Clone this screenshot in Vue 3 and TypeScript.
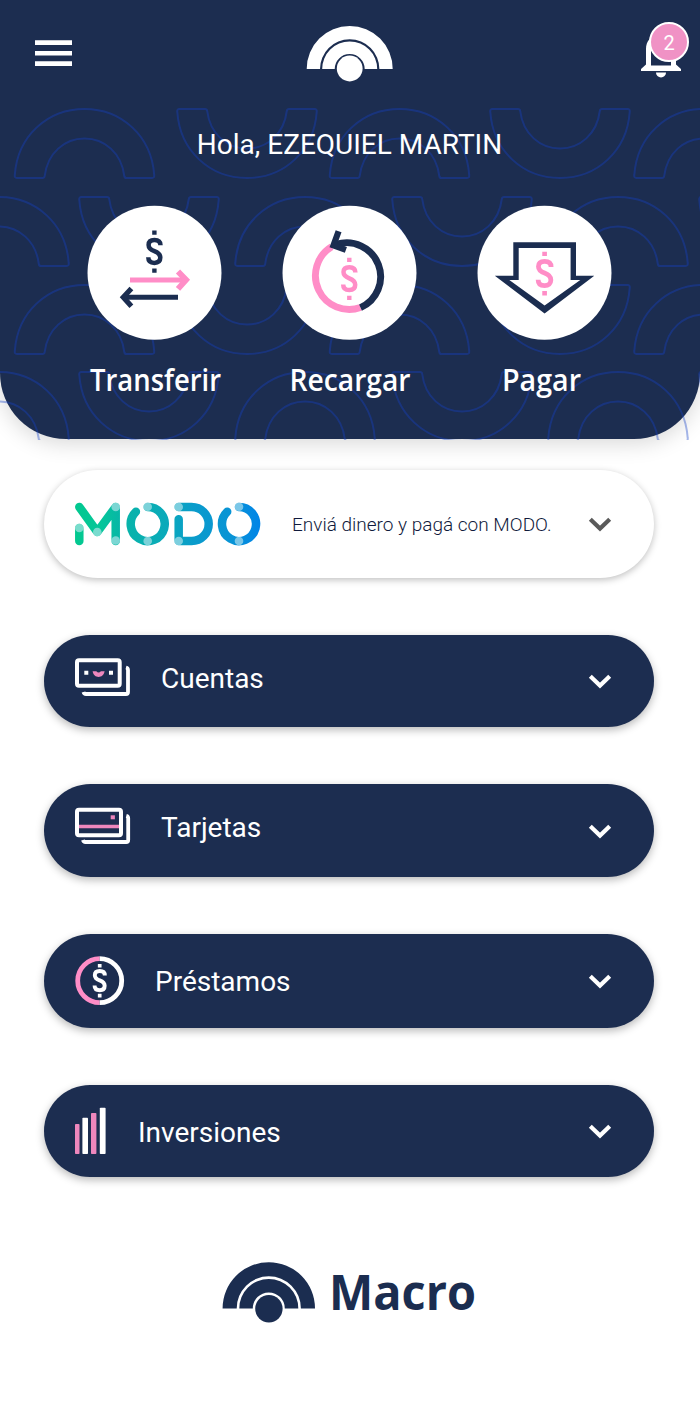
<script setup lang="ts">
interface Arch { x: number; y: number; flip: boolean }
interface Product { id: string; label: string; top: number; height: number; iconWidth: number }

const evenRow = [
  { x: 84.5, flip: false }, { x: 247, flip: true }, { x: 399.5, flip: false },
  { x: 560, flip: true }, { x: 704, flip: false },
]
const oddRow = [
  { x: -1, flip: false }, { x: 149, flip: true }, { x: 305, flip: false },
  { x: 462, flip: true }, { x: 618, flip: false }, { x: 769, flip: true },
]
const arches: Arch[] = [109, 197, 285, 372].flatMap((y, i) =>
  (i % 2 ? oddRow : evenRow).map((a) => ({ ...a, y })),
)
const archPath =
  'M-67.5 69 C-69.3 69 -70 68 -69.7 66 C-67 27 -37 0 0 0 C37 0 67 27 69.7 66 C70 68 69.3 69 67.5 69 H42 C40.6 69 40 68.400 39.800 67 C37 44 20 29.500 0 29.500 C-20 29.500 -37 44 -39.800 67 C-40 68.400 -40.600 69 -42 69 Z'
const dollarPath =
  'M6.100 -6.200 C6.100 -9.900 3.700 -11.500 0 -11.500 C-3.700 -11.500 -5.800 -9.700 -5.800 -6.600 C-5.800 -2.900 -3.200 -1.600 0 -.4 C3.500 .9 5.900 2.500 5.900 6.100 C5.900 9.500 3.700 11.400 0 11.400 C-3.800 11.400 -6.100 9.500 -6.100 5.800'

const products: Product[] = [
  { id: 'cuentas', label: 'Cuentas', top: 635, height: 92, iconWidth: 56 },
  { id: 'tarjetas', label: 'Tarjetas', top: 784, height: 93, iconWidth: 56 },
  { id: 'prestamos', label: 'Préstamos', top: 934, height: 94, iconWidth: 50 },
  { id: 'inversiones', label: 'Inversiones', top: 1085, height: 92, iconWidth: 32 },
]
const modoDots = [
  [79.3, 528], [97.3, 532], [115.7, 507], [115.7, 540.5], [147.7, 506.7],
  [147.7, 541], [178.7, 507], [178.7, 541], [239, 506.7], [239, 541],
]
</script>

<template>
  <main class="screen">
    <header class="hero">
      <svg class="pattern" viewBox="0 0 700 440" width="700" height="440">
        <g fill="none" stroke="#1443c8" stroke-opacity=".38" stroke-width="2">
          <path
            v-for="(a, i) in arches"
            :key="i"
            :d="archPath"
            :transform="a.flip ? `translate(${a.x} ${a.y + 69}) scale(1 -1)` : `translate(${a.x} ${a.y})`"
          />
        </g>
      </svg>
      <nav class="topbar">
        <svg class="menu" viewBox="35 40 37 27" width="37" height="27" fill="#fff">
          <path d="M35 40.300h37v4.700H35zM35 51h37v4.600H35zM35 61.300h37v4.600H35z" />
        </svg>
        <svg class="brand" viewBox="306 25 88 58" width="88" height="58" fill="#fff">
          <path d="M306.700 69a43 43 0 0 1 86 0H379.400a29.700 29.700 0 0 0 -59.400 0Z" />
          <path d="M322.200 69a27.500 27.500 0 0 1 55 0H364.700a15 15 0 0 0 -30 0Z" />
          <circle cx="349.700" cy="68.500" r="12.900" />
        </svg>
        <div class="alerts">
          <svg viewBox="640 30 42 49" width="42" height="49" fill="#fff">
            <path fill-rule="evenodd" d="M646 64.500V49c0-8 5-13 12-14.500V33h6v1.500c8 2 12 7 12 14.500v15.500l5 4.500v2h-40v-2ZM651 65.500h20V49c0-6-4-10-10-10s-10 4-10 10Z" />
            <path d="M656 72.500h10a5 5 0 0 1 -10 0Z" />
          </svg>
          <span class="badge">2</span>
        </div>
      </nav>
      <h1 class="greeting">Hola, EZEQUIEL MARTIN</h1>
      <div class="actions">
        <div class="action">
          <svg class="disc" viewBox="87 205 135 135" width="135" height="135">
            <circle cx="154.500" cy="272.700" r="67" fill="#fff" />
            <g transform="translate(154.400 251.500)">
              <path :d="dollarPath" fill="none" stroke="#1b2d50" stroke-width="4.500" />
              <path d="M-2.200-21h4.400v4.200h-4.400zM-2.200 17h4.400v4.200h-4.400z" fill="#1b2d50" />
            </g>
            <g fill="none" stroke-width="5">
              <path d="M130 279.900H185" stroke="#ff8dc7" />
              <path d="M178 271.500l8.100 8.400-8.100 9" stroke="#ff8dc7" stroke-width="5.800" />
              <path d="M178 297.200H124" stroke="#1b2d50" />
              <path d="M131.400 288.500l-8.100 8.700 8.100 9" stroke="#1b2d50" stroke-width="5.200" />
            </g>
          </svg>
          <svg class="caption" viewBox="79 345 150 61" width="150" height="61">
            <text x="90" y="391" textLength="131" lengthAdjust="spacingAndGlyphs">Transferir</text>
          </svg>
        </div>
        <div class="action">
          <svg class="disc" viewBox="281.700 205 135 135" width="135" height="135">
            <circle cx="349.200" cy="272.700" r="67" fill="#fff" />
            <g fill="none" stroke-width="6.900">
              <path d="M331.300 246.700A33.900 33.900 0 0 0 360.200 307.600" stroke="#ff8dc7" />
              <path d="M335.900 244.400A33.900 33.900 0 0 1 360.200 307.600" stroke="#1b2d50" />
            </g>
            <path d="M338.300 231.300L333.200 245.300 345.600 249.800" fill="none" stroke="#1b2d50" stroke-width="6.200" />
            <g transform="translate(349 278.700)">
              <path :d="dollarPath" fill="none" stroke="#ff8dc7" stroke-width="4.500" />
              <path d="M-2.200-21h4.400v4.200h-4.400zM-2.200 17h4.400v4.200h-4.400z" fill="#ff8dc7" />
            </g>
          </svg>
          <svg class="caption" viewBox="274 345 150 61" width="150" height="61">
            <text x="289.500" y="391" textLength="121" lengthAdjust="spacingAndGlyphs">Recargar</text>
          </svg>
        </div>
        <div class="action">
          <svg class="disc" viewBox="476.700 205 135 135" width="135" height="135">
            <circle cx="544.200" cy="272.700" r="67" fill="#fff" />
            <path fill-rule="evenodd" fill="#1b2d50" d="M513 242.300H575.700V275.700H594L544.300 313.500 494.500 275.700H513ZM518.400 248V280H509L544.300 305.500 580 280H570.300V248Z" />
            <g transform="translate(544.300 273.500) scale(1.060)">
              <path :d="dollarPath" fill="none" stroke="#ff8dc7" stroke-width="4.500" />
              <path d="M-2.200-20.600h4.400v4.200h-4.400zM-2.200 16.600h4.400v4.200h-4.400z" fill="#ff8dc7" />
            </g>
          </svg>
          <svg class="caption" viewBox="469 345 150 61" width="150" height="61">
            <text x="502" y="391" textLength="79" lengthAdjust="spacingAndGlyphs">Pagar</text>
          </svg>
        </div>
      </div>
    </header>

    <section class="card modo">
      <svg viewBox="74 501 188 46" width="188" height="46">
        <defs>
          <linearGradient id="modo-tone" gradientUnits="userSpaceOnUse" x1="75" y1="524" x2="261" y2="524">
            <stop offset="0" stop-color="#02c88f" />
            <stop offset=".14" stop-color="#05c69a" />
            <stop offset=".25" stop-color="#08b5a8" />
            <stop offset=".5" stop-color="#0aa9bb" />
            <stop offset=".65" stop-color="#0a9bcc" />
            <stop offset=".85" stop-color="#0893d6" />
            <stop offset="1" stop-color="#0084e8" />
          </linearGradient>
        </defs>
        <g fill="none" stroke="url(#modo-tone)" stroke-width="8.500" stroke-linecap="round" stroke-linejoin="round">
          <path d="M79.300 528l.01 12.900M79.300 506.900L97.300 532 115.700 506.900V540.900" />
          <path d="M135.900 511.700A17 17.100 0 1 0 147.700 506.900" />
          <path d="M178.700 506.900H191.600A17.100 17.100 0 0 1 191.600 541.100H178.700L178.690 519.300" />
          <path d="M227.200 511.700A17 17.100 0 1 0 239 506.900" />
        </g>
        <circle v-for="([x, y], i) in modoDots" :key="i" :cx="x" :cy="y" r="4.300" fill="#c4e9f0" fill-opacity=".62" />
      </svg>
      <span class="pitch">Enviá dinero y pagá con MODO.</span>
      <svg class="chevron" viewBox="0 0 24 16" width="24" height="16">
        <path d="M2.300 3.300L12 12.500 21.700 3.300" />
      </svg>
    </section>

    <section v-for="p in products" :key="p.id" class="card product" :class="p.id">
      <svg :viewBox="`75 ${p.top} ${p.iconWidth} ${p.height}`" :width="p.iconWidth" :height="p.height">
        <template v-if="p.id === 'cuentas'">
          <g fill="none" stroke="#fff" stroke-width="4">
            <rect x="77" y="660.200" width="42.700" height="25.600" rx="2" />
            <path d="M126 667.500q2 .5 2 2.500V692q0 2-2 2H86q-2 0-2.500-2" stroke-width="3.800" />
          </g>
          <path d="M92.600 671.200h3.700q2.300 2.600 4.600 0h3.700c-1.200 7.600-10.800 7.600-12 0Z" fill="#ee87bd" />
          <path d="M84.300 670.700h4v4h-4zM109 670.700h4v4h-4z" fill="#fff" />
        </template>
        <template v-else-if="p.id === 'tarjetas'">
          <path d="M78 826.500h43" stroke="#ee87bd" stroke-width="3.600" />
          <g fill="none" stroke="#fff" stroke-width="4">
            <rect x="77" y="809.700" width="44" height="25.600" rx="2" />
            <path d="M126.300 815.800q1.900.5 1.900 2.500V840q0 2-2 2H85.500q-2 0-2.500-2" stroke-width="3.800" />
          </g>
          <rect x="110.700" y="815.300" width="4.200" height="4" fill="#ee87bd" />
        </template>
        <template v-else-if="p.id === 'prestamos'">
          <g fill="none" stroke-width="4.800">
            <path d="M99.700 958.700a22 22 0 0 0 0 44" stroke="#ff8dc7" />
            <path d="M99.700 958.700a22 22 0 0 1 0 44" stroke="#fff" />
          </g>
          <g transform="translate(99.700 980.700) scale(.84)">
            <path :d="dollarPath" fill="none" stroke="#fff" stroke-width="4.700" />
            <path d="M-2.200-20h4.400v4.400h-4.400zM-2.200 15.600h4.400v4.400h-4.400z" fill="#fff" />
          </g>
        </template>
        <template v-else>
          <g fill="#ee87bd">
            <rect x="75" y="1124" width="4.500" height="30" rx=".8" />
            <rect x="91" y="1113" width="5.400" height="41" rx=".8" />
          </g>
          <g fill="#fff">
            <rect x="82.400" y="1117.700" width="5.600" height="36.300" rx=".8" />
            <rect x="99.800" y="1107.800" width="5.800" height="46.200" rx=".8" />
          </g>
        </template>
      </svg>
      <span class="label">{{ p.label }}</span>
      <svg class="chevron" viewBox="0 0 24 16" width="24" height="16">
        <path d="M2.300 3.300L12 12.500 21.700 3.300" />
      </svg>
    </section>

    <footer class="footer">
      <svg viewBox="222 1255 260 75" width="260" height="75" fill="#1b2d50">
        <path d="M222.600 1308.400a46.200 46.200 0 0 1 92.400 0H300.900a32.100 32.100 0 0 0 -64.200 0Z" />
        <path d="M239.300 1308.400a29.500 29.500 0 0 1 59 0H284.800a16 16 0 0 0 -32 0Z" />
        <circle cx="268.900" cy="1308.700" r="13.700" />
        <text class="wordmark" x="329" y="1309.800" textLength="147" lengthAdjust="spacingAndGlyphs">Macro</text>
      </svg>
    </footer>
  </main>
</template>

<style>
body {
  margin: 0;
  background: #fff;
}
</style>

<style scoped>
.screen {
  width: 700px;
  height: 1407px;
  overflow: hidden;
  background: #fff;
  font-family: Roboto, "Liberation Sans", sans-serif;
}
.hero {
  position: relative;
  height: 439px;
  box-sizing: border-box;
  border-radius: 0 0 66px 66px;
  background: #1c2d50;
  box-shadow: 0 4px 22px rgba(0, 0, 0, 0.16);
}
.pattern {
  position: absolute;
  inset: 0;
}
.topbar {
  position: relative;
  display: flex;
  justify-content: space-between;
  height: 108px;
  padding: 0 12px 0 35px;
}
.menu {
  margin-top: 40px;
}
.brand {
  margin: 25px 12px 0 0;
}
.alerts {
  position: relative;
  width: 48px;
  padding-top: 30px;
}
.alerts svg {
  display: block;
}
.badge {
  position: absolute;
  top: 22px;
  left: 9px;
  box-sizing: border-box;
  width: 40px;
  height: 40px;
  border: 2px solid #fff;
  border-radius: 50%;
  background: #f092c5;
  color: #fff;
  font-size: 20px;
  line-height: 38px;
  text-align: center;
}
.greeting {
  position: relative;
  margin: 0;
  padding: 21px 1px 0 0;
  color: #fff;
  font-size: 28px;
  font-weight: 400;
  line-height: 32px;
  text-align: center;
  white-space: nowrap;
}
.actions {
  position: relative;
  display: flex;
  justify-content: center;
  gap: 45px;
  padding: 44px 2px 0 0;
}
.action {
  display: flex;
  flex-direction: column;
  align-items: center;
  width: 150px;
}
.disc {
  display: block;
}
.caption {
  margin-top: 5px;
  overflow: visible;
  fill: #fff;
  font-family: "Open Sans", "Noto Sans", sans-serif;
  font-size: 30.5px;
  font-weight: 600;
}
.card {
  display: flex;
  align-items: center;
  box-sizing: border-box;
  width: 610px;
  margin-left: 44px;
  padding: 0 42px 0 31px;
  border-radius: 55px;
  box-shadow: 0 3px 9px rgba(0, 0, 0, 0.28);
}
.card svg {
  flex: none;
}
.modo {
  height: 108px;
  margin-top: 31px;
  padding-left: 30px;
  background: #fff;
  box-shadow: 0 2px 7px rgba(0, 0, 0, 0.25);
}
.pitch {
  margin-left: 30px;
  color: #101a3c;
  font-size: 19px;
  font-weight: 300;
  white-space: nowrap;
}
.chevron {
  margin-left: auto;
  fill: none;
  stroke: #fff;
  stroke-width: 4.2;
}
.modo .chevron {
  stroke: #5a5a5a;
}
.product {
  height: 92px;
  background: #1c2d50;
}
.label {
  margin-left: 30px;
  color: #fff;
  font-size: 28px;
  line-height: 34px;
  white-space: nowrap;
}
.cuentas {
  margin-top: 57px;
}
.cuentas .label {
  padding-bottom: 5px;
}
.tarjetas {
  height: 93px;
  margin-top: 57px;
}
.tarjetas .label {
  padding-bottom: 6px;
}
.prestamos {
  height: 94px;
  margin-top: 57px;
}
.prestamos .label {
  padding-top: 2px;
}
.inversiones {
  margin-top: 57px;
}
.inversiones .label {
  margin-left: 31px;
  padding-top: 4px;
}
.footer {
  margin: 78px 0 0 222px;
}
.footer svg {
  display: block;
}
.wordmark {
  font-family: "Open Sans", "Noto Sans", sans-serif;
  font-size: 48px;
  font-weight: 700;
}
</style>
